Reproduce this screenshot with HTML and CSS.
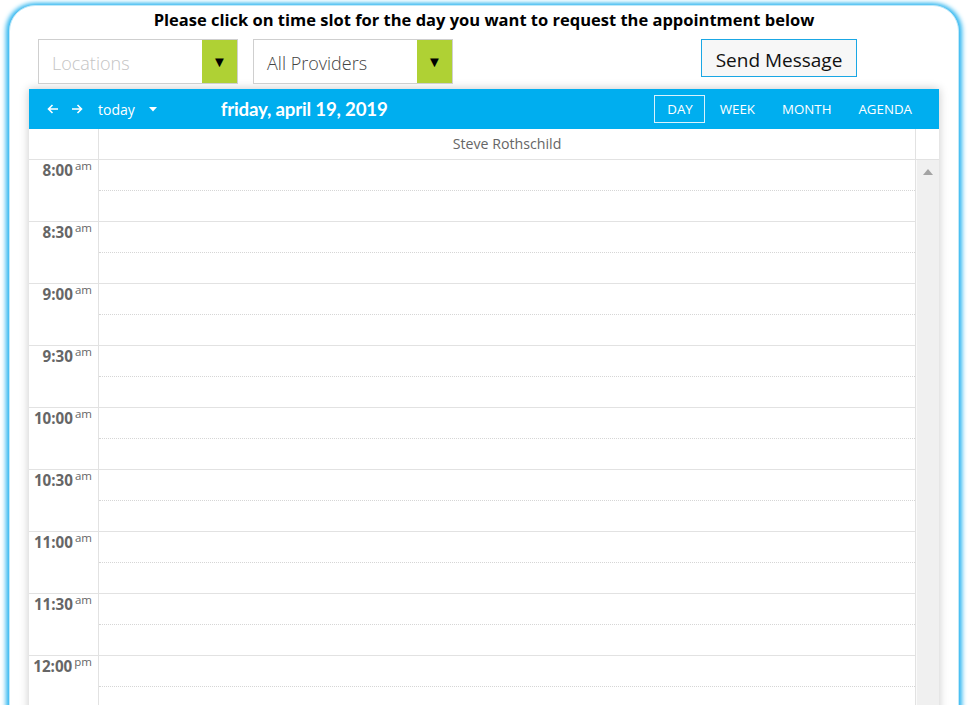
FILE: index.html
```html
<!DOCTYPE html>
<html lang="en">
<head>
    <meta charset="UTF-8">
    <title>Request Appointment</title>
    <link rel="stylesheet" href="styles.css">
</head>
<body>
    <div class="frame">
        <h1 class="title">Please click on time slot for the day you want to request the appointment below</h1>

        <div class="filters">
            <div class="select">
                <span class="select-text placeholder">Locations</span>
                <span class="select-btn">&#9660;</span>
            </div>
            <div class="select">
                <span class="select-text">All Providers</span>
                <span class="select-btn">&#9660;</span>
            </div>
            <button class="send-btn" type="button">Send Message</button>
        </div>

        <div class="calendar">
            <div class="toolbar">
                <span class="nav-arrow">
                    <svg width="12" height="12" viewBox="0 0 12 12"><path d="M11 6H1.5M5.5 2L1.5 6l4 4" fill="none" stroke="#fff" stroke-width="1.6"/></svg>
                </span>
                <span class="nav-arrow">
                    <svg width="12" height="12" viewBox="0 0 12 12"><path d="M1 6h9.5M6.5 2l4 4-4 4" fill="none" stroke="#fff" stroke-width="1.6"/></svg>
                </span>
                <span class="today">today</span>
                <span class="caret">
                    <svg width="8" height="5" viewBox="0 0 8 5"><path d="M0 0h8L4 4.5z" fill="#fff"/></svg>
                </span>
                <span class="date-label">friday, april 19, 2019</span>
                <div class="views">
                    <span class="view active">DAY</span>
                    <span class="view">WEEK</span>
                    <span class="view">MONTH</span>
                    <span class="view">AGENDA</span>
                </div>
            </div>

            <div class="cal-head">
                <div class="gutter-head"></div>
                <div class="resource">Steve Rothschild</div>
                <div class="head-spacer"></div>
            </div>

            <div class="cal-body">
                <div class="grid">
                    <div class="row"><div class="time">8:00<sup>am</sup></div><div class="slot"><div class="quarter"></div></div></div>
                    <div class="row"><div class="time">8:30<sup>am</sup></div><div class="slot"><div class="quarter"></div></div></div>
                    <div class="row"><div class="time">9:00<sup>am</sup></div><div class="slot"><div class="quarter"></div></div></div>
                    <div class="row"><div class="time">9:30<sup>am</sup></div><div class="slot"><div class="quarter"></div></div></div>
                    <div class="row"><div class="time">10:00<sup>am</sup></div><div class="slot"><div class="quarter"></div></div></div>
                    <div class="row"><div class="time">10:30<sup>am</sup></div><div class="slot"><div class="quarter"></div></div></div>
                    <div class="row"><div class="time">11:00<sup>am</sup></div><div class="slot"><div class="quarter"></div></div></div>
                    <div class="row"><div class="time">11:30<sup>am</sup></div><div class="slot"><div class="quarter"></div></div></div>
                    <div class="row"><div class="time">12:00<sup>pm</sup></div><div class="slot"><div class="quarter"></div></div></div>
                </div>
                <div class="scrollbar">
                    <svg class="scroll-up" width="10" height="6" viewBox="0 0 10 6"><path d="M0 6L5 0l5 6z" fill="#a3a3a3"/></svg>
                </div>
            </div>
        </div>
    </div>
</body>
</html>
```

FILE: styles.css
```css
:root {
    --cal-blue: #00aeef; --lime: #afd134; --line: #e2e2e2;
    --text-grey: #666; --font: 'Open Sans', 'Noto Sans', sans-serif;
}
* { margin: 0; padding: 0; box-sizing: border-box; }
body { font-family: var(--font); background: #fff; overflow: hidden; height: 705px; }

.frame { margin: 5px 16px 0 9px; height: 712px; overflow: hidden; background: #fff; border-radius: 26px 26px 0 0; border: 1px solid #bfe9fa; box-shadow: -3px 0 5px #35b8f0, 3px 0 5px #35b8f0, 0 -2px 5px #9ddcf6; }
.title { font-size: 16.5px; font-weight: 700; text-align: center; color: #000; line-height: 22px; padding-top: 3px; }

.filters { display: flex; align-items: flex-start; margin: 8px 0 0 28px; }
.select { display: flex; width: 200px; height: 45px; border: 1px solid #cfcfcf; background: #fff; margin-right: 15px; }
.select-text { flex: 1; padding-left: 13px; font-size: 18px; line-height: 47px; color: #444; font-weight: 300; }
.select-text.placeholder { color: #c4c4c4; }
.select-btn { width: 35px; background: var(--lime); color: #000; font-size: 15px; text-align: center; line-height: 42px; }
.send-btn { margin-left: 233px; width: 156px; height: 38px; border: 1px solid #1aa7e4; background: #f7f7f7; font-family: var(--font); font-size: 19px; color: #111; padding-top: 3px; }

.calendar { margin: 5px 0 0 19px; width: 910px; height: 700px; box-shadow: 0 0 9px rgba(0,0,0,0.22); background: #fff; }
.toolbar { display: flex; align-items: center; height: 40px; background: var(--cal-blue); color: #fff; padding-left: 18px; }
.nav-arrow { display: flex; width: 24px; }
.today { font-size: 14px; margin-left: 3px; }
.caret { display: flex; margin-left: 14px; padding-top: 1px; }
.date-label { font-family: 'Lato', sans-serif; font-weight: 700; font-size: 18.7px; margin-left: 64px; letter-spacing: -0.2px; }
.views { display: flex; align-items: center; margin-left: auto; margin-right: 27px; }
.view { font-size: 13.3px; padding: 4px 0; margin-left: 27px; }
.view.active { border: 1px solid #d9f1fc; padding: 4px 11px 4px 12px; margin-left: 0; margin-right: -12px; }

.cal-head { display: flex; height: 31px; border-bottom: 1px solid var(--line); }
.gutter-head { width: 70px; border-right: 1px solid var(--line); }
.resource { flex: 1; text-align: center; font-size: 14.2px; line-height: 30px; color: #666; border-right: 1px solid var(--line); }
.head-spacer { width: 23px; }

.cal-body { display: flex; }
.grid { flex: 1; border-right: 1px solid var(--line); }
.row { display: flex; height: 62px; border-bottom: 1px solid var(--line); }
.time { width: 70px; border-right: 1px solid var(--line); text-align: right; padding: 0 6px 0 0; font-size: 15.2px; line-height: 12px; font-weight: 700; color: var(--text-grey); white-space: nowrap; }
.time sup { font-size: 11.5px; font-weight: 400; margin-left: 2px; }
.slot { flex: 1; }
.quarter { height: 31px; border-bottom: 1px dotted #d6d6d6; }

.scrollbar { width: 23px; background: #f0f0f0; border-left: 1px solid #fafafa; display: flex; justify-content: center; align-items: flex-start; }
.scroll-up { margin-top: 9px; }
```
